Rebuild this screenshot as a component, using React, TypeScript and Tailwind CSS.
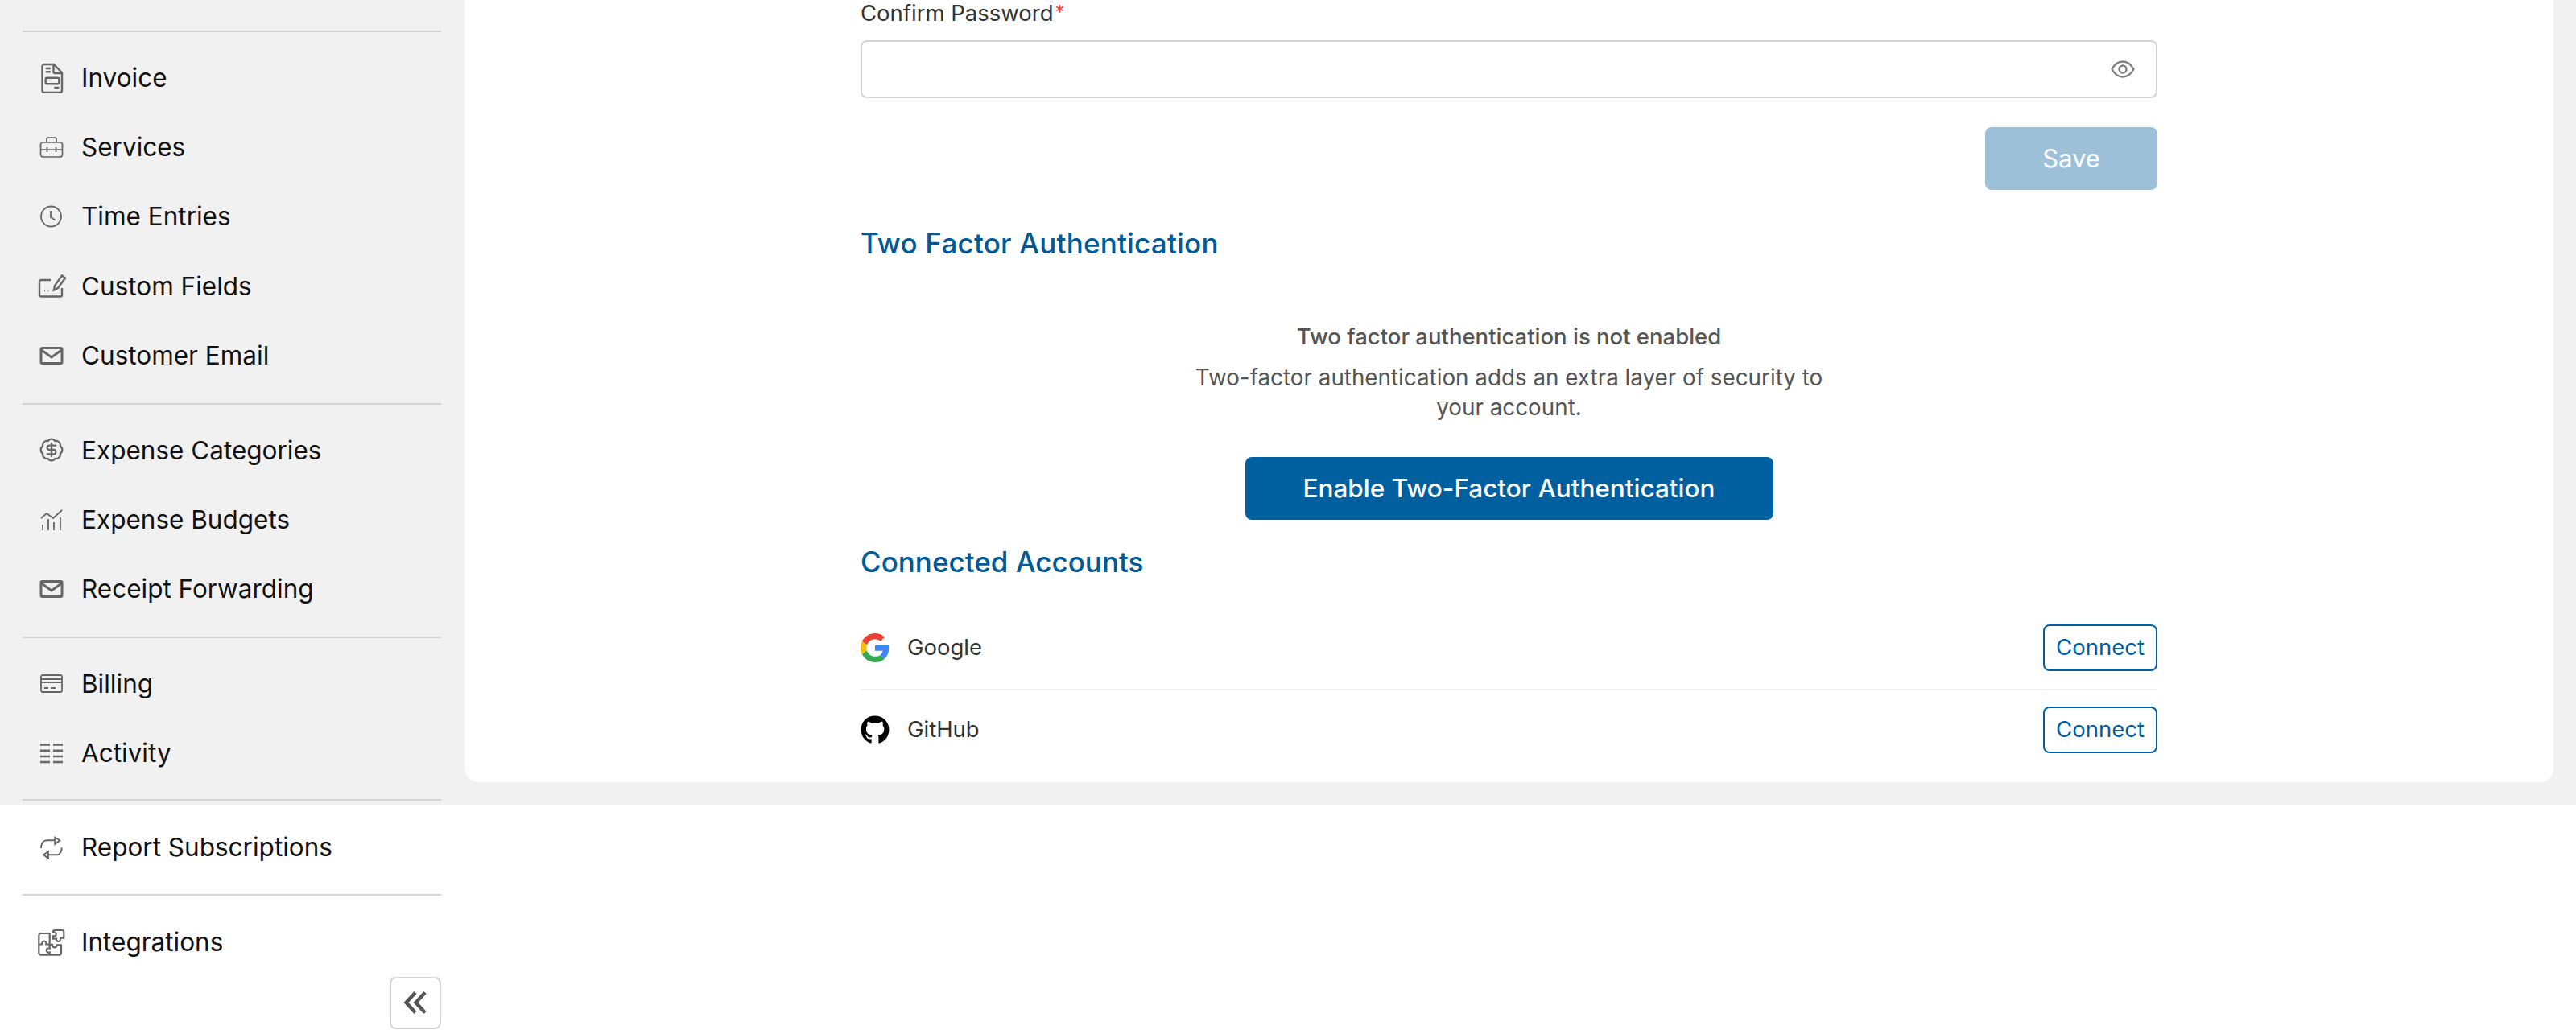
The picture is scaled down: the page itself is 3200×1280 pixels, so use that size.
import { BadgeDollarSign } from "lucide-react"
import { FaGithub } from "react-icons/fa"

const ic = "fill-none stroke-[#666666]"

function InvoiceIcon() {
  return (
    <svg width="32" height="40" viewBox="0 0 32 40" className={ic} strokeWidth="2.4">
      <path d="M4.500 6.500A2.500 2.500 0 0 1 7 4h12l10 10.500v22a2.500 2.500 0 0 1-2.500 2.500H7a2.500 2.500 0 0 1-2.500-2.500z" />
      <path d="M18.500 4.500V13a2 2 0 0 0 2 2h8M8.700 9h6M8.700 13.300h6" />
      <rect x="8.700" y="20.700" width="16.600" height="7.600" rx="1.500" />
      <path d="M19.300 33h6" />
    </svg>
  )
}

function ToolboxIcon() {
  return (
    <svg width="32" height="28" viewBox="0 0 32 28" className={ic} strokeWidth="1.7">
      <path d="M10 8V4a2 2 0 0 1 2-2h8a2 2 0 0 1 2 2v4" />
      <rect x="2.5" y="8" width="27" height="18" rx="3" />
      <path d="M2.5 17h27M10.5 14v6M21.5 14v6" />
    </svg>
  )
}

function ClockIcon() {
  return (
    <svg width="32" height="32" viewBox="0 0 32 32" className={ic} strokeWidth="1.8">
      <circle cx="15.5" cy="16" r="12.5" />
      <path d="M15 9v8l5.5 3.5" />
    </svg>
  )
}

function FieldsIcon() {
  return (
    <svg width="36" height="30" viewBox="0 0 36 30" className={ic} strokeWidth="2.4">
      <path d="M17 8H5a2 2 0 0 0-2 2v16.500a2 2 0 0 0 2 2h24a2 2 0 0 0 2-2V18" />
      <path d="M21 20.500l1-5.500L31 2.500l4 3-9 12.500z" />
      <path d="M9 21h.8M13.500 21h.8M18 21h.8" />
    </svg>
  )
}

function MailIcon() {
  return (
    <svg width="32" height="24" viewBox="0 0 32 24" className={ic} strokeWidth="3">
      <rect x="3" y="2.500" width="26" height="19" rx="1.500" />
      <path d="M3.500 5l12.500 9L28.500 5" />
    </svg>
  )
}

function BudgetIcon() {
  return (
    <svg width="32" height="28" viewBox="0 0 32 28" className={ic} strokeWidth="1.8">
      <path d="M3 12l7-6 8 6L29 2" />
      <path d="M5 20v7M12 13v14M19 17v10M27 11v16" />
    </svg>
  )
}

function CardIcon() {
  return (
    <svg width="32" height="24" viewBox="0 0 32 24" className={ic} strokeWidth="1.8">
      <rect x="3" y="2" width="26" height="21" rx="2" />
      <path d="M3 7h26M3 11h26M7 18h5M15 18h6" />
    </svg>
  )
}

function ActivityIcon() {
  return (
    <svg width="32" height="28" viewBox="0 0 32 28" className={ic} strokeWidth="2.6">
      <path d="M2 3.500h12M18 3.500h12M2 10.700h12M18 10.700h12M2 18h12M18 18h12M2 25h12M18 25h12" />
    </svg>
  )
}

function RepeatIcon() {
  return (
    <svg width="32" height="32" viewBox="0 0 32 32" className={ic} strokeWidth="1.9">
      <path d="M3 18c0-6 3-9.700 7.300-9.700h10" />
      <path d="M20.300 4.700L26.300 8.300 20.300 13z" />
      <path d="M28.700 17.300c0 5-2.500 9-6 9H12" />
      <path d="M12 22.300L6 26.300l6 4.400z" />
    </svg>
  )
}

function PuzzleIcon() {
  return (
    <svg width="36" height="36" viewBox="0 0 36 36" className={ic} strokeWidth="2.2">
      <path d="M15.700 7H5a2.700 2.700 0 0 0-2.700 2.700V31A2.700 2.700 0 0 0 5 33.700h22.300A2.700 2.700 0 0 0 30 31v-9.700h-5c0 2-2 3.500-4 3s-2.500-2-2-3.500h-3.300V7" />
      <path d="M2.300 20.500h4c-.5-2 .5-4 2.500-4s3 2 2.500 4h4.400" />
      <path d="M15.700 21.500v4c-2-.5-4 .5-4 2.500s2 3 4 2.500v3.200" />
      <path d="M20 5.500A2 2 0 0 1 22 3h9.300a2 2 0 0 1 2 2.300v7.400H29c.5 2.500-1 4.300-2.500 4.300s-2.800-1.500-2.500-3.300h-4v-3.400c2 .5 3.800-.5 3.800-2.200S22 5.300 20 5.500z" />
    </svg>
  )
}

function EyeIcon() {
  return (
    <svg width="30" height="24" viewBox="0 0 30 24" className="fill-none stroke-[#808080]" strokeWidth="2.400">
      <path d="M1.500 12C5 5.500 9.500 2.500 15 2.500S25 5.500 28.500 12C25 18.500 20.500 21.500 15 21.500S5 18.500 1.500 12z" />
      <circle cx="15" cy="12" r="4.500" />
    </svg>
  )
}

function GoogleIcon() {
  return (
    <svg width="36" height="36" viewBox="0 0 48 48">
      <path fill="#EA4335" d="M24 9.500c3.540 0 6.710 1.220 9.210 3.600l6.850-6.850C35.900 2.380 30.470 0 24 0 14.620 0 6.510 5.380 2.560 13.220l7.980 6.190C12.430 13.720 17.740 9.500 24 9.500z" />
      <path fill="#4285F4" d="M46.980 24.550c0-1.570-.15-3.090-.38-4.550H24v9.020h12.940c-.58 2.960-2.260 5.480-4.780 7.180l7.730 6c4.510-4.180 7.090-10.360 7.090-17.650z" />
      <path fill="#FBBC05" d="M10.530 28.590c-.48-1.450-.76-2.990-.76-4.590s.27-3.140.76-4.590l-7.980-6.190C.92 16.460 0 20.120 0 24c0 3.880.92 7.540 2.560 10.780l7.970-6.190z" />
      <path fill="#34A853" d="M24 48c6.480 0 11.930-2.130 15.890-5.810l-7.730-6c-2.150 1.450-4.920 2.300-8.160 2.300-6.260 0-11.570-4.220-13.470-9.910l-7.980 6.190C6.510 42.620 14.620 48 24 48z" />
    </svg>
  )
}

type Item = { label: string; icon: React.ReactNode }

const topGroups: { items: Item[]; pb: string }[] = [
  {
    pb: "pb-[16px]",
    items: [
      { label: "Invoice", icon: <InvoiceIcon /> },
      { label: "Services", icon: <ToolboxIcon /> },
      { label: "Time Entries", icon: <ClockIcon /> },
      { label: "Custom Fields", icon: <FieldsIcon /> },
      { label: "Customer Email", icon: <MailIcon /> },
    ],
  },
  {
    pb: "pb-[16px]",
    items: [
      { label: "Expense Categories", icon: <BadgeDollarSign size={32} strokeWidth={1.7} color="#666666" /> },
      { label: "Expense Budgets", icon: <BudgetIcon /> },
      { label: "Receipt Forwarding", icon: <MailIcon /> },
    ],
  },
  {
    pb: "pb-[14px]",
    items: [
      { label: "Billing", icon: <CardIcon /> },
      { label: "Activity", icon: <ActivityIcon /> },
    ],
  },
]

function NavRow({ item }: { item: Item }) {
  return (
    <div className="flex items-center h-[86.4px]">
      <div className="w-[73px] flex justify-center pr-[1px]">{item.icon}</div>
      <span className="text-[31.5px] text-[#111111] whitespace-nowrap">{item.label}</span>
    </div>
  )
}

function NavGroup({ items, pb }: { items: Item[]; pb: string }) {
  return (
    <div className={`border-t-2 border-[#d4d4d4] pt-[13px] ${pb}`}>
      {items.map((item) => (
        <NavRow key={item.label} item={item} />
      ))}
    </div>
  )
}

function Sidebar() {
  return (
    <aside className="w-[578px] shrink-0">
      {/* top part sits on the grey page, the rest runs past it */}
      <div className="h-[1000px] bg-[#f1f1f1] pl-[28px] pr-[30px] pt-[38px]">
        {topGroups.map((group, i) => (
          <NavGroup key={i} items={group.items} pb={group.pb} />
        ))}
        <div className="border-t-2 border-[#d4d4d4]" />
      </div>
      <div className="pl-[28px] pr-[30px]">
        <div className="pt-[9px] pb-[16px]">
          <NavRow item={{ label: "Report Subscriptions", icon: <RepeatIcon /> }} />
        </div>
        <div className="border-t-2 border-[#d4d4d4] pt-[14px]">
          <NavRow item={{ label: "Integrations", icon: <PuzzleIcon /> }} />
        </div>
        <div className="flex justify-end">
          <button className="w-[64px] h-[65px] border-2 border-[#d4d4d4] rounded-lg flex items-center justify-center">
            <svg width="30" height="30" viewBox="0 0 30 30" className="fill-none stroke-[#555555]" strokeWidth="4.400">
              <path d="M15 2.500L3.500 15 15 27.500M27 2.500L15.500 15 27 27.500" />
            </svg>
          </button>
        </div>
      </div>
    </aside>
  )
}

function AccountRow({ name, icon, height }: { name: string; icon: React.ReactNode; height: string }) {
  return (
    <div className={`flex items-center justify-between ${height}`}>
      <div className="flex items-center gap-[22px]">
        {icon}
        <span className="text-[27.5px] text-[#333333]">{name}</span>
      </div>
      <button className="w-[142px] h-[58px] border-2 border-[#00609f] rounded-lg text-[27.5px] text-[#00609f]">
        Connect
      </button>
    </div>
  )
}

export default function App() {
  return (
    <div className="flex items-start h-[1280px] bg-white [font-family:Inter,sans-serif]">
      <Sidebar />
      <main className="flex-1 h-[1000px] bg-[#f1f1f1] pr-[28px] pb-[28px]">
        <div className="h-full bg-white rounded-b-2xl">
          <div className="w-[1611px] ml-[491px]">
            <label className="block h-[50px] pt-[2px] text-[27.5px] leading-[28px] text-[#333333]">
              Confirm Password<span className="text-[#ef4444] align-top text-[24px] ml-[2px]">*</span>
            </label>
            <div className="h-[72px] border-2 border-[#d4d4d4] rounded-lg flex items-center justify-end pr-[26px]">
              <EyeIcon />
            </div>
            <div className="flex justify-end mt-[36px]">
              <button className="w-[214px] h-[78px] bg-[#9cc0d8] rounded-lg text-white text-[31px]">Save</button>
            </div>
            <h2 className="mt-[44px] text-[35px] tracking-[0.2px] leading-[44px] font-medium text-[#005a96]">
              Two Factor Authentication
            </h2>
            <div className="flex flex-col items-center mt-[76px]">
              <p className="text-[27.5px] leading-[36px] font-medium text-[#555555]">
                Two factor authentication is not enabled
              </p>
              <p className="mt-[15px] w-[800px] text-center text-[27.8px] leading-[37px] text-[#555555]">
                Two-factor authentication adds an extra layer of security to your account.
              </p>
              <button className="mt-[43px] w-[656px] h-[78px] bg-[#00609f] rounded-lg text-white text-[31.5px] font-medium">
                Enable Two-Factor Authentication
              </button>
            </div>
            <h2 className="mt-[30px] text-[35px] leading-[44px] font-medium text-[#005a96]">Connected Accounts</h2>
            <div className="mt-[34px]">
              <AccountRow name="Google" icon={<GoogleIcon />} height="h-[101px] mb-[1px]" />
              <div className="border-t-2 border-[#f1f1f1]" />
              <AccountRow name="GitHub" icon={<FaGithub size={36} color="#000000" />} height="h-[98px]" />
            </div>
          </div>
        </div>
      </main>
    </div>
  )
}
